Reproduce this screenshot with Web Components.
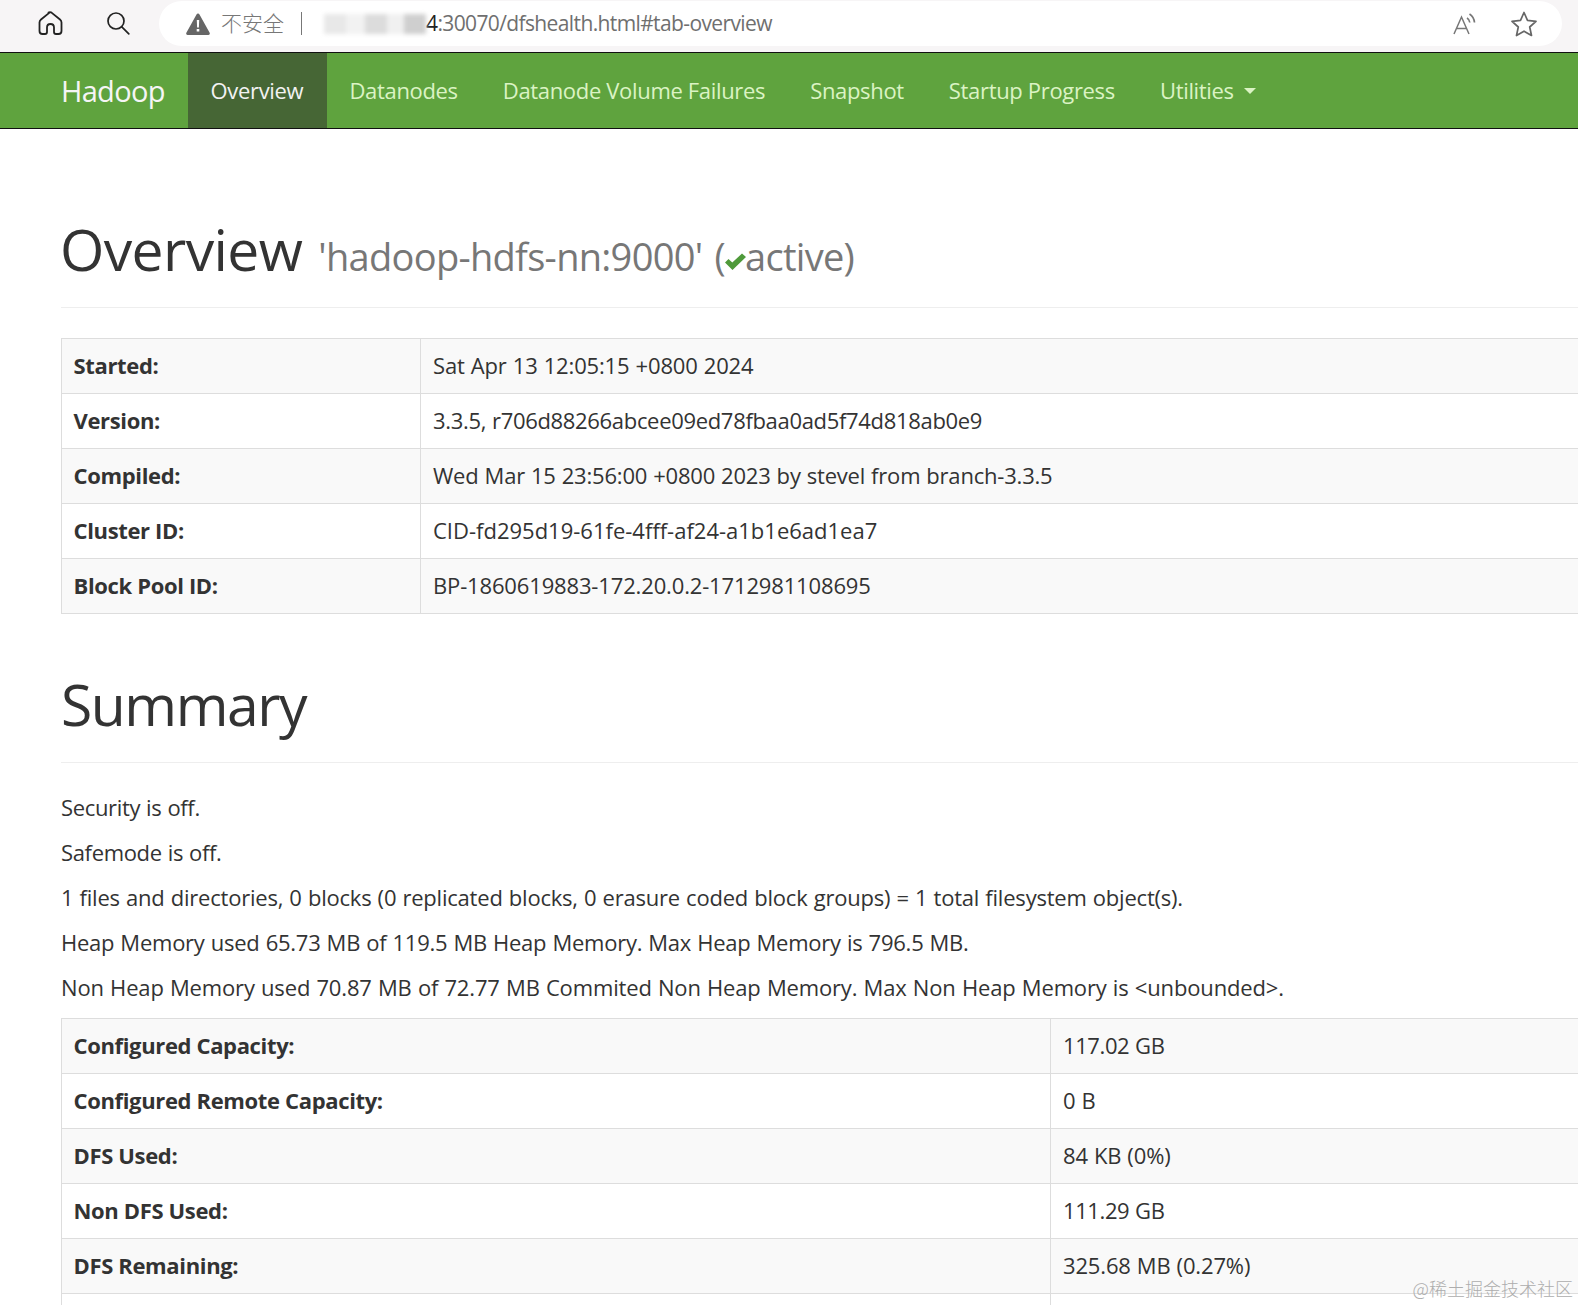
<!DOCTYPE html>
<html>
<head>
<meta charset="utf-8">
<title>Namenode information</title>
<style>
  html, body { margin: 0; height: 1305px; overflow: hidden; background: #fff; }
  body { font-family: "Open Sans", "Noto Sans CJK SC", sans-serif; color: #333; position: relative; }
</style>
</head>
<body>
<browser-bar></browser-bar>
<hadoop-navbar>
  <nav-link active>Overview</nav-link>
  <nav-link>Datanodes</nav-link>
  <nav-link>Datanode Volume Failures</nav-link>
  <nav-link>Snapshot</nav-link>
  <nav-link>Startup Progress</nav-link>
  <nav-link caret>Utilities</nav-link>
</hadoop-navbar>
<page-body>
  <page-header style="--top:84px;--indent:-1px">Overview <small slot="small">'hadoop-hdfs-nn:9000' (<check-icon></check-icon><span style="letter-spacing:-.7px">active)</span></small></page-header>
  <info-table style="--label:359px;--top:30px">
    <info-row label="Started:">Sat Apr 13 12:05:15 +0800 2024</info-row>
    <info-row label="Version:" style="letter-spacing:-.32px">3.3.5, r706d88266abcee09ed78fbaa0ad5f74d818ab0e9</info-row>
    <info-row label="Compiled:" style="letter-spacing:-.2px">Wed Mar 15 23:56:00 +0800 2023 by stevel from branch-3.3.5</info-row>
    <info-row label="Cluster ID:" style="letter-spacing:0">CID-fd295d19-61fe-4fff-af24-a1b1e6ad1ea7</info-row>
    <info-row label="Block Pool ID:">BP-1860619883-172.20.0.2-1712981108695</info-row>
  </info-table>
  <page-header style="--top:54px;--track:-1.45px">Summary</page-header>
  <text-line style="margin-top:22px;letter-spacing:-.35px">Security is off.</text-line>
  <text-line style="letter-spacing:-.35px">Safemode is off.</text-line>
  <text-line style="letter-spacing:-.21px">1 files and directories, 0 blocks (0 replicated blocks, 0 erasure coded block groups) = 1 total filesystem object(s).</text-line>
  <text-line style="letter-spacing:-.25px">Heap Memory used 65.73 MB of 119.5 MB Heap Memory. Max Heap Memory is 796.5 MB.</text-line>
  <text-line>Non Heap Memory used 70.87 MB of 72.77 MB Commited Non Heap Memory. Max Non Heap Memory is &lt;unbounded&gt;.</text-line>
  <info-table style="--label:989px;--top:8px">
    <info-row label="Configured Capacity:" style="letter-spacing:-.4px">117.02 GB</info-row>
    <info-row label="Configured Remote Capacity:">0 B</info-row>
    <info-row label="DFS Used:">84 KB (0%)</info-row>
    <info-row label="Non DFS Used:" style="letter-spacing:-.4px">111.29 GB</info-row>
    <info-row label="DFS Remaining:">325.68 MB (0.27%)</info-row>
    <info-row label=""></info-row>
  </info-table>
</page-body>
<water-mark>@稀土掘金技术社区</water-mark>

<script>
// one helper so every element gets the same open shadow root setup
class Base extends HTMLElement {
    constructor(html) {
        super();
        this.attachShadow({mode: 'open'}).innerHTML = html;
    }
}

customElements.define('browser-bar', class extends Base {
    constructor() {
        super(`
            <style>
                :host { display: flex; align-items: flex-start; height: 52px; background: #f7f5f6; }
                .tool { height: 46px; display: flex; align-items: center; justify-content: center; flex: none; }
                .home { margin-left: 18px; width: 66px; }
                .search { width: 67px; margin-right: 8px; }
                .pill { flex: 1; height: 45px; margin: 1px 16px 0 0; background: #fff; border-radius: 23px;
                        display: flex; align-items: center; padding-left: 27px; color: #6f6f6f; font-size: 21px; }
                .warn { margin-right: 11px; flex: none; }
                .insecure { font-family: "Noto Sans CJK SC", sans-serif; font-size: 21px; font-weight: 300; color: #777; margin-top: -3px; }
                .sep { width: 1px; height: 23px; background: #777; margin: 0 22px 0 17px; flex: none; }
                .ip { width: 102px; height: 20px; flex: none; filter: blur(2px);
                      background: linear-gradient(90deg, #e8e8e8 0 22%, #f2f2f2 22% 40%, #dcdcdc 40% 62%, #f0f0f0 62% 78%, #cfcfcf 78%); }
                .url { font-size: 21px; letter-spacing: -.62px; white-space: nowrap; margin-top: -2px; }
                .url b { font-weight: 400; color: #222; }
                .right { margin-left: auto; display: flex; align-items: center; gap: 34px; padding-right: 25px; }
            </style>
            <div class="tool home"><svg width="26" height="26" viewBox="0 0 26 26" fill="none" stroke="#222" stroke-width="1.8" stroke-linejoin="round"><path d="M11.500 2.600 3 9.500q-1.500 1.200-1.500 3V21q0 3 3 3h2.500q2 0 2-2v-4.500q0-3.500 3.500-3.500t3.500 3.500V22q0 2 2 2h2.500q3 0 3-3v-8.500q0-1.800-1.500-3l-8.500-6.900q-1.500-1.100-3 0z"/></svg></div>
            <div class="tool search"><svg width="24" height="24" viewBox="0 0 24 24" fill="none" stroke="#222" stroke-width="1.7"><circle cx="10" cy="10" r="8"/><path d="m15.800 15.800 7 7" stroke-linecap="round"/></svg></div>
            <div class="pill">
                <svg class="warn" width="24" height="22" viewBox="0 0 24 22"><path d="M12 .5q1 0 1.500 1L23.500 19.500q1 2-1 2.500H1.500q-2-.5-1-2.500L10.500 1.500Q11 .5 12 .5z" fill="#666"/><path d="M10.800 7h2.400l-.3 7.500h-1.800zM10.700 16h2.600v2.600h-2.600z" fill="#fff"/></svg>
                <span class="insecure">不安全</span>
                <span class="sep"></span>
                <span class="ip"></span>
                <span class="url"><b>4</b>:30070/dfshealth.html#tab-overview</span>
                <span class="right">
                    <svg width="24" height="24" viewBox="0 0 24 24" fill="none" stroke="#777" stroke-width="1.5"><path d="m1 22 7.500-17L16 22M3.800 16.500h9.500"/><path d="M14 6q2.500 1.500 2.800 4.500M16.500 2q4.500 3 5 8.500" stroke-width="1.700"/></svg>
                    <svg width="26" height="26" viewBox="0 0 26 26" fill="none" stroke="#666" stroke-width="1.700" stroke-linejoin="round"><path d="m13 1.500 3.500 7.800 8.500 1-6.300 5.700 1.800 8.500L13 20.200 5.500 24.500l1.800-8.500L1 10.300l8.500-1z"/></svg>
                </span>
            </div>
        `);
    }
});

customElements.define('hadoop-navbar', class extends Base {
    constructor() {
        super(`
            <style>
                :host { display: flex; height: 75px; background: #5fa33e; border-top: 1px solid #111; border-bottom: 1px solid #111; padding-left: 61px; }
                .brand { color: #f5f5f5; font-size: 29px; width: 127px; line-height: 75px; letter-spacing: -.7px; }
            </style>
            <div class="brand">Hadoop</div>
            <slot></slot>
        `);
    }
});

customElements.define('nav-link', class extends Base {
    constructor() {
        super(`
            <style>
                :host { display: flex; align-items: center; box-sizing: border-box; padding: 0 22.500px 1px; height: 75px; color: #dbf3c4; font-size: 22px; letter-spacing: -.33px; white-space: nowrap; }
                :host([active]) { background: #466635; color: #f2f2f2; padding-right: 23.700px; }
                .caret { display: none; margin-left: 10px; margin-top: 2px; border-top: 6px solid currentColor; border-left: 6px solid transparent; border-right: 6px solid transparent; }
                :host([caret]) .caret { display: block; }
            </style>
            <slot></slot><span class="caret"></span>
        `);
    }
});

customElements.define('page-body', class extends Base {
    constructor() {
        super(`
            <style>:host { display: block; padding-left: 61px; width: 1760px; }</style>
            <slot></slot>
        `);
    }
});

customElements.define('page-header', class extends Base {
    constructor() {
        super(`
            <style>
                :host { display: flex; align-items: baseline; gap: 16px; margin-top: var(--top); height: 95px; border-bottom: 1px solid #eee; box-sizing: border-box; line-height: 72px; font-size: 57px; color: #333; white-space: nowrap; letter-spacing: var(--track, -.6px); }
                .t { margin-left: var(--indent, 0); }
                ::slotted(small) { font-size: 38px; color: #777; letter-spacing: -.7px; word-spacing: 3px; }
            </style>
            <span class="t"><slot></slot></span><slot name="small"></slot>
        `);
    }
});

customElements.define('check-icon', class extends Base {
    constructor() {
        super(`
            <style>:host { display: inline-block; width: 21px; height: 17px; margin: 0 -1px 0 0; vertical-align: 1px; }</style>
            <svg width="21" height="17" viewBox="0 0 21 17"><path d="M0 9.500 3.500 6l3.800 3.500L17 .5 21 4 7.500 17z" fill="#4f9a3a"/></svg>
        `);
    }
});

customElements.define('info-table', class extends Base {
    constructor() {
        super(`
            <style>
                :host { display: block; margin-top: var(--top); border: 1px solid #ddd; border-bottom: 0; }
            </style>
            <slot></slot>
        `);
    }
});

customElements.define('info-row', class extends Base {
    constructor() {
        super(`
            <style>
                :host { display: grid; grid-template-columns: var(--label) 1fr; height: 55px; box-sizing: border-box; border-bottom: 1px solid #ddd; font-size: 22px; letter-spacing: -.15px; word-spacing: .5px; line-height: 52px; color: #333; }
                :host(:nth-child(odd)) { background: #f9f9f9; }
                .k { font-weight: 700; padding-left: 11.500px; border-right: 1px solid #ddd; white-space: nowrap; letter-spacing: -.35px; word-spacing: 0; }
                .v { padding-left: 12px; white-space: nowrap; }
            </style>
            <div class="k"></div><div class="v"><slot></slot></div>
        `);
    }
    connectedCallback() {
        this.shadowRoot.querySelector('.k').textContent = this.getAttribute('label');
    }
});

customElements.define('text-line', class extends Base {
    constructor() {
        super(`
            <style>:host { display: block; height: 45px; line-height: 45px; font-size: 22px; letter-spacing: -.15px; word-spacing: .65px; white-space: nowrap; color: #333; }</style>
            <slot></slot>
        `);
    }
});

customElements.define('water-mark', class extends Base {
    constructor() {
        super(`
            <style>:host { position: absolute; right: 5px; bottom: 4px; font-family: "Noto Sans CJK SC", sans-serif; font-size: 18px; font-weight: 300; color: #adadad; }</style>
            <slot></slot>
        `);
    }
});
</script>
</body>
</html>
